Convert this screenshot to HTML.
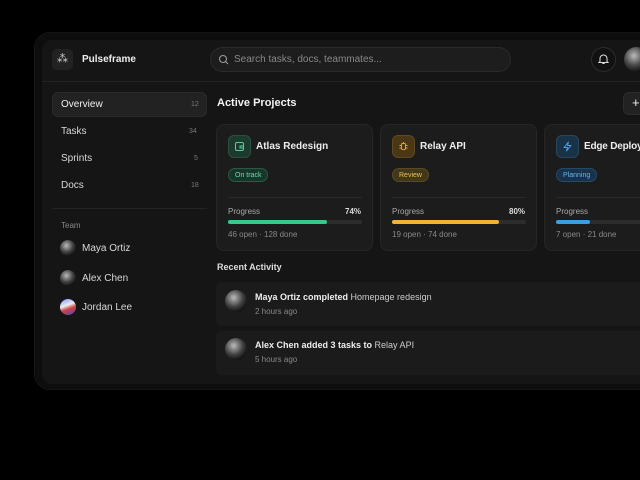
<!DOCTYPE html>
<html><head><style>
*{box-sizing:border-box;margin:0;padding:0}
body{width:640px;height:480px;background:#000;font-family:"Liberation Sans",sans-serif;overflow:hidden;position:relative;color:#e6e6e6}
.a{position:absolute}
.frame{left:34px;top:32px;width:640px;height:358px;background:#0d0d0d;border-radius:16px;border:1px solid #141414}
.panel{left:42px;top:40px;width:620px;height:344px;background:#151515;border-radius:10px}
.t{position:absolute;white-space:nowrap}
.card{position:absolute;top:124px;width:157px;height:127px;background:#1c1c1c;border:1px solid #262626;border-radius:8px}
.ic{position:absolute;left:11px;top:10px;width:23px;height:23px;border-radius:6px}
.badge{position:absolute;left:11px;top:43px;height:14px;border-radius:7px;font-size:7px;line-height:14px;padding:0 6px}
.bar{position:absolute;left:11px;top:95px;width:134px;height:4px;border-radius:2px;background:#2c2c2c}
.bar i{display:block;height:4px;border-radius:2px}
.act{position:absolute;left:216px;width:440px;height:44px;background:#1b1b1b;border-radius:6px}
.av{position:absolute;border-radius:50%;background:radial-gradient(circle at 40% 35%,#bbb,#444 45%,#111 75%)}
.nav{font-size:10px;color:#d8d8d8}
.cnt{font-size:7px;color:#777}
</style></head><body>
<div class="a frame"></div>
<div class="a panel"></div>
<div class="a" style="left:42px;top:81px;width:620px;height:1px;background:#222"></div>
<div class="a" style="left:52px;top:49px;width:21px;height:21px;border-radius:5px;background:#222"></div>
<div class="t" style="left:57px;top:52px;font-size:11px;color:#ccc">⁂</div>
<div class="t" style="left:82px;top:54px;font-size:10px;font-weight:bold;color:#eee">Pulseframe</div>
<div class="a" style="left:210px;top:47px;width:301px;height:25px;border-radius:13px;background:#1d1d1d;border:1px solid #2a2a2a"></div>
<svg class="a" style="left:218px;top:54px" width="11" height="11" viewBox="0 0 11 11"><circle cx="5" cy="5" r="3.5" fill="none" stroke="#999" stroke-width="1.1"/><line x1="7.6" y1="7.6" x2="10" y2="10" stroke="#999" stroke-width="1.1"/></svg>
<div class="t" style="left:234px;top:54px;font-size:10px;color:#888">Search tasks, docs, teammates...</div>
<div class="a" style="left:591px;top:47px;width:25px;height:25px;border-radius:50%;border:1px solid #2c2c2c;background:#111"></div>
<svg class="a" style="left:598px;top:53px" width="11" height="12" viewBox="0 0 11 12"><path d="M2 8.5V5.5a3.5 3.5 0 017 0v3l1 1H1z M4.3 10.5h2.4" fill="none" stroke="#ddd" stroke-width="1"/></svg>
<div class="av" style="left:624px;top:47px;width:25px;height:25px"></div>

<div class="a" style="left:52px;top:92px;width:155px;height:25px;border-radius:6px;background:#222;border:1px solid #2a2a2a"></div>
<div class="t nav" style="left:61px;top:99px;color:#f0f0f0">Overview</div><div class="t cnt" style="left:191px;top:101px">12</div>
<div class="t nav" style="left:61px;top:126px">Tasks</div><div class="t cnt" style="left:189px;top:128px">34</div>
<div class="t nav" style="left:61px;top:153px">Sprints</div><div class="t cnt" style="left:194px;top:155px">5</div>
<div class="t nav" style="left:61px;top:180px">Docs</div><div class="t cnt" style="left:191px;top:182px">18</div>
<div class="a" style="left:52px;top:208px;width:155px;height:1px;background:#242424"></div>
<div class="t" style="left:61px;top:221px;font-size:8px;color:#888">Team</div>
<div class="av" style="left:60px;top:240px;width:16px;height:16px"></div><div class="t nav" style="left:82px;top:243px">Maya Ortiz</div>
<div class="av" style="left:60px;top:270px;width:16px;height:16px"></div><div class="t nav" style="left:82px;top:273px">Alex Chen</div>
<div class="av" style="left:60px;top:299px;width:16px;height:16px;background:linear-gradient(160deg,#7a8cff,#eee 40%,#c44 60%,#5040c0)"></div><div class="t nav" style="left:82px;top:302px">Jordan Lee</div>

<div class="t" style="left:217px;top:97px;font-size:11px;font-weight:bold;color:#f2f2f2">Active Projects</div>
<div class="a" style="left:623px;top:92px;width:30px;height:23px;border-radius:6px;background:#222;border:1px solid #2c2c2c"></div>
<div class="t" style="left:632px;top:95px;font-size:13px;color:#eee">+</div>

<div class="card" style="left:216px">
<div class="ic" style="background:#1d3a2e;border:1px solid #2a5040"></div>
<svg class="a" style="left:17px;top:16px" width="11" height="11" viewBox="0 0 11 11"><rect x="1.5" y="1.5" width="8" height="8" rx="1.5" fill="none" stroke="#4fd49a" stroke-width="1"/><path d="M6 5h3.5v2H6z" fill="none" stroke="#4fd49a" stroke-width="1"/></svg>
<div class="t" style="left:39px;top:16px;font-size:10px;font-weight:bold;color:#eee">Atlas Redesign</div>
<div class="badge" style="background:#17352a;color:#6fdcaa;border:1px solid #2a5a44">On track</div>
<div class="a" style="left:11px;top:72px;width:134px;height:1px;background:#2a2a2a"></div>
<div class="t" style="left:11px;top:82px;font-size:8px;color:#aaa">Progress</div><div class="t" style="left:128px;top:82px;font-size:8px;font-weight:bold;color:#ddd">74%</div>
<div class="bar"><i style="width:74%;background:#35c98a"></i></div>
<div class="t" style="left:11px;top:105px;font-size:8px;color:#888">46 open · 128 done</div></div>

<div class="card" style="left:380px">
<div class="ic" style="background:#4a3716;border:1px solid #604820"></div>
<svg class="a" style="left:17px;top:16px" width="11" height="11" viewBox="0 0 11 11"><path d="M3.5 3.5c0-1.5 4-1.5 4 0v4c0 1.5-4 1.5-4 0z M1.5 4.5h2 M7.5 4.5h2 M1.5 7h2 M7.5 7h2 M5.5 2V1" fill="none" stroke="#e8a93a" stroke-width="0.9"/></svg>
<div class="t" style="left:39px;top:16px;font-size:10px;font-weight:bold;color:#eee">Relay API</div>
<div class="badge" style="background:#43371a;color:#e8c25a;border:1px solid #5a4a22">Review</div>
<div class="a" style="left:11px;top:72px;width:134px;height:1px;background:#2a2a2a"></div>
<div class="t" style="left:11px;top:82px;font-size:8px;color:#aaa">Progress</div><div class="t" style="left:128px;top:82px;font-size:8px;font-weight:bold;color:#ddd">80%</div>
<div class="bar"><i style="width:80%;background:#f0b52c"></i></div>
<div class="t" style="left:11px;top:105px;font-size:8px;color:#888">19 open · 74 done</div></div>

<div class="card" style="left:544px;width:120px">
<div class="ic" style="background:#1a3246;border:1px solid #27475e"></div>
<svg class="a" style="left:17px;top:16px" width="11" height="11" viewBox="0 0 11 11"><path d="M6.5 1L2 6.5h3.5L4.5 10 9 4.5H5.5z" fill="none" stroke="#4aa6e8" stroke-width="0.9" stroke-linejoin="round"/></svg>
<div class="t" style="left:39px;top:16px;font-size:10px;font-weight:bold;color:#eee;letter-spacing:-0.2px">Edge Deploy</div>
<div class="badge" style="background:#17324a;color:#6ab4ea;border:1px solid #25496a">Planning</div>
<div class="a" style="left:11px;top:72px;width:134px;height:1px;background:#2a2a2a"></div>
<div class="t" style="left:11px;top:82px;font-size:8px;color:#aaa">Progress</div>
<div class="bar"><i style="width:25%;background:#3a9ee0"></i></div>
<div class="t" style="left:11px;top:105px;font-size:8px;color:#888">7 open · 21 done</div></div>

<div class="t" style="left:217px;top:262px;font-size:9px;font-weight:bold;color:#ddd">Recent Activity</div>
<div class="act" style="top:282px"></div>
<div class="av" style="left:225px;top:290px;width:22px;height:22px"></div>
<div class="t" style="left:255px;top:292px;font-size:9px;color:#ccc"><b style="color:#eee">Maya Ortiz completed</b> Homepage redesign</div>
<div class="t" style="left:255px;top:307px;font-size:8px;color:#888">2 hours ago</div>
<div class="act" style="top:331px"></div>
<div class="av" style="left:225px;top:338px;width:22px;height:22px"></div>
<div class="t" style="left:255px;top:340px;font-size:9px;color:#ccc"><b style="color:#eee">Alex Chen added 3 tasks to</b> Relay API</div>
<div class="t" style="left:255px;top:355px;font-size:8px;color:#888">5 hours ago</div>
</body></html>
